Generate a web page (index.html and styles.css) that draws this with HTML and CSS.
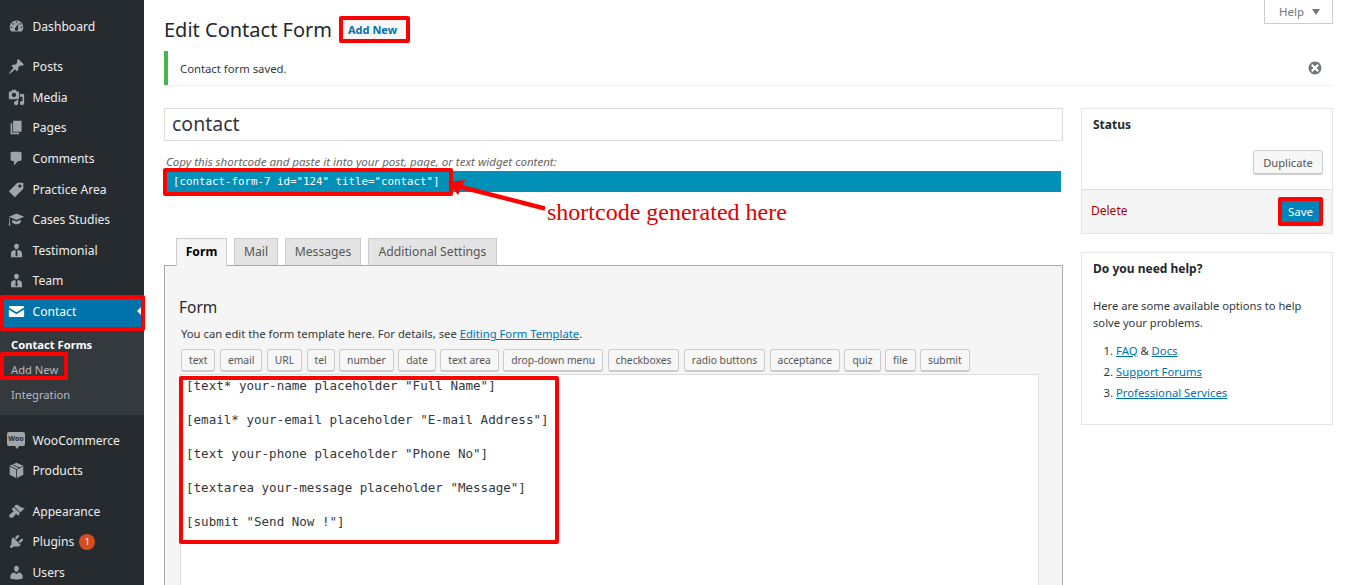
FILE: index.html
```html
<!DOCTYPE html>
<html lang="en">
<head>
<meta charset="utf-8">
<title>Edit Contact Form</title>
<link rel="stylesheet" href="styles.css">
</head>
<body>
<aside class="sidebar">
  <ul class="menu">
    <li class="item"><svg class="ic" viewBox="0 0 20 20"><path fill-rule="evenodd" d="M3.76 16h12.48c1.1-1.37 1.76-3.11 1.76-5 0-4.42-3.58-8-8-8s-8 3.58-8 8c0 1.89.66 3.63 1.76 5zM10 4c.55 0 1 .45 1 1s-.45 1-1 1-1-.45-1-1 .45-1 1-1zM6 6c.55 0 1 .45 1 1s-.45 1-1 1-1-.45-1-1 .45-1 1-1zm8 0c.55 0 1 .45 1 1s-.45 1-1 1-1-.45-1-1 .45-1 1-1zm-5.37 5.55L12 7v6c0 1.1-.9 2-2 2s-2-.9-2-2c0-.57.24-1.08.63-1.45zM4 10c.55 0 1 .45 1 1s-.45 1-1 1-1-.45-1-1 .45-1 1-1zm12 0c.55 0 1 .45 1 1s-.45 1-1 1-1-.45-1-1 .45-1 1-1z"/></svg>Dashboard</li>
  </ul>
  <ul class="menu flush">
    <li class="item"><svg class="ic" viewBox="0 0 20 20"><path d="M10.44 3.02l1.82-1.82 6.36 6.35-1.83 1.82c-1.05-.68-2.48-.57-3.41.36l-.75.75c-.92.93-1.04 2.35-.35 3.41l-1.83 1.82-2.41-2.41-2.8 2.79c-.42.42-3.38 2.71-3.8 2.29s1.86-3.39 2.28-3.81l2.79-2.79L4.1 9.36l1.83-1.82c1.05.69 2.48.57 3.4-.36l.75-.75c.93-.92 1.05-2.35.36-3.41z"/></svg>Posts</li>
    <li class="item"><svg class="ic" viewBox="0 0 20 20"><path fill-rule="evenodd" d="M13 11V4c0-.55-.45-1-1-1h-1.67L9 1H5L3.67 3H2c-.55 0-1 .45-1 1v7c0 .55.45 1 1 1h10c.55 0 1-.45 1-1zM7 4.5c1.38 0 2.5 1.12 2.5 2.5S8.38 9.5 7 9.5 4.5 8.38 4.5 7 5.62 4.5 7 4.5zM14 6h5v10.5c0 1.38-1.12 2.5-2.5 2.5S14 17.88 14 16.5s1.12-2.5 2.5-2.5c.17 0 .34.02.5.05V9h-3V6zm-4 8.05V13h2v3.5c0 1.38-1.12 2.5-2.5 2.5S7 17.88 7 16.5 8.12 14 9.5 14c.17 0 .34.02.5.05z"/></svg>Media</li>
    <li class="item"><svg class="ic" viewBox="0 0 20 20"><path d="M6 15V2h10v13H6zm-1 1h8v2H3V5h2v11z"/></svg>Pages</li>
    <li class="item"><svg class="ic" viewBox="0 0 20 20"><path d="M5 2h9c1.1 0 2 .9 2 2v7c0 1.1-.9 2-2 2h-2l-5 5v-5H5c-1.1 0-2-.9-2-2V4c0-1.1.9-2 2-2z"/></svg>Comments</li>
    <li class="item"><svg class="ic" viewBox="0 0 20 20"><path fill-rule="evenodd" d="M11 2h7v7L8 19l-7-7zm3 6c1.1 0 2-.9 2-2s-.9-2-2-2-2 .9-2 2 .9 2 2 2z"/></svg>Practice Area</li>
    <li class="item"><svg class="ic" viewBox="0 0 20 20"><path d="M10 3L1 6.8l9 3.8 9-3.8zM5 10.3v3.2c1 1.3 3 2.1 5 2.1s4-.8 5-2.1v-3.2l-5 2.1zM1.5 8v5L.8 17h2l-.5-4V8.4z"/></svg>Cases Studies</li>
    <li class="item"><svg class="ic" viewBox="0 0 20 20"><path fill-rule="evenodd" d="M10 2c1.7 0 2.8 1.2 2.8 2.9S11.700 8.500 10 8.500 7.200 6.600 7.200 4.900 8.300 2 10 2zM7.500 9.500L9.200 10.300 8.700 15.500 10 17 11.300 15.500 10.800 10.300 12.500 9.500C14.500 10 16.500 11.200 16.500 13.500V18H3.500V13.500C3.500 11.200 5.500 10 7.500 9.500z"/></svg>Testimonial</li>
    <li class="item"><svg class="ic" viewBox="0 0 20 20"><path fill-rule="evenodd" d="M10 2c1.700 0 2.800 1.200 2.800 2.900S11.700 8.500 10 8.500 7.200 6.600 7.200 4.900 8.300 2 10 2zM7.500 9.500L9.200 10.300 8.700 15.500 10 17 11.300 15.500 10.800 10.300 12.500 9.500C14.500 10 16.500 11.200 16.500 13.500V18H3.500V13.500C3.500 11.200 5.500 10 7.500 9.500z"/></svg>Team</li>
    <li class="item current"><svg class="ic" viewBox="0 0 20 20"><path d="M2.500 3.500h15c.8 0 1.500.7 1.500 1.500v.3l-9 5.500-9-5.500V5c0-.8.7-1.500 1.500-1.500zM1 7.600l9 5.500 9-5.500V15c0 .8-.7 1.500-1.500 1.500h-15C1.700 16.500 1 15.800 1 15z"/></svg>Contact<span class="caret"></span></li>
  </ul>
  <ul class="submenu">
    <li class="sub active">Contact Forms</li>
    <li class="sub">Add New</li>
    <li class="sub">Integration</li>
  </ul>
  <ul class="menu">
    <li class="item"><span class="woo">Woo</span>WooCommerce</li>
    <li class="item"><svg class="ic" viewBox="0 0 20 20"><path d="M10 1l8 3.500v10.500l-8 4-8-4V4.500z"/><path class="cube-lines" d="M2.500 5L10 8.700 17.500 5M10 8.700V19M6 3.500l7.500 3.400"/></svg>Products</li>
  </ul>
  <ul class="menu">
    <li class="item"><svg class="ic" viewBox="0 0 20 20"><path d="M14.480 11.060L7.410 3.990l1.500-1.500c.5-.56 2.300-.47 3.510.32 1.210.8 1.430 1.280 2.910 2.100 1.180.64 2.450 1.260 4.450.85zm-.71.71L6.700 4.700 4.930 6.470c-.39.39-.39 1.020 0 1.410l1.060 1.060c.39.39.39 1.030 0 1.420-.6.6-1.430 1.110-2.210 1.690-.35.26-.7.53-1.010.84C1.430 13.710.96 15.560 2.200 16.800c1.250 1.250 3.110.78 4.110-.22.33-.33.6-.68.86-1.040.57-.78 1.080-1.610 1.690-2.210.39-.39 1.020-.39 1.410 0l1.060 1.060c.39.39 1.020.39 1.410 0z"/></svg>Appearance</li>
    <li class="item"><svg class="ic" viewBox="0 0 20 20"><path d="M13.110 4.360L9.870 7.600 8 5.730l3.240-3.240c.35-.34 1.050-.2 1.560.32.52.51.66 1.210.31 1.550zm-8 1.770l.91-1.120 9.010 9.010-1.190.84c-.71.71-2.630 1.160-3.820 1.160H6.140L4.900 17.260c-.59.59-1.540.59-2.120 0-.59-.58-.59-1.530 0-2.120l1.240-1.240v-3.880c0-1.130.4-3.190 1.090-3.890zm7.260 3.970l3.240-3.240c.34-.35 1.040-.21 1.550.31.52.51.66 1.210.31 1.550l-3.240 3.250z"/></svg>Plugins<span class="badge">1</span></li>
    <li class="item"><svg class="ic" viewBox="0 0 20 20"><path d="M10 9.250c-2.270 0-2.730-3.440-2.730-3.440C7 4.020 7.820 2 9.970 2c2.160 0 2.980 2.020 2.710 3.810 0 0-.41 3.440-2.680 3.440zm0 2.570L12.720 10c2.390 0 4.520 2.330 4.520 4.530v2.490s-3.650 1.130-7.240 1.130c-3.650 0-7.240-1.130-7.240-1.130v-2.490c0-2.250 1.940-4.480 4.470-4.480z"/></svg>Users</li>
  </ul>
</aside>

<main class="content">
  <header class="head">
    <div class="titles">
      <h1 class="title">Edit Contact Form</h1>
      <a class="add-new">Add New</a>
    </div>
    <div class="help-tab">Help<span class="help-caret"></span></div>
  </header>

  <div class="notice">
    <span>Contact form saved.</span>
    <svg class="dismiss" viewBox="0 0 20 20"><path fill-rule="evenodd" d="M10 2c4.420 0 8 3.580 8 8s-3.580 8-8 8-8-3.580-8-8 3.580-8 8-8zM15 13l-3-3 3-3-2-2-3 3-3-3-2 2 3 3-3 3 2 2 3-3 3 3z"/></svg>
  </div>

  <div class="columns">
    <section class="primary">
      <div class="title-input">contact</div>
      <p class="copy-note">Copy this shortcode and paste it into your post, page, or text widget content:</p>
      <div class="shortcode">[contact-form-7 id="124" title="contact"]</div>

      <nav class="tabs">
        <span class="tab tab-form on">Form</span>
        <span class="tab tab-mail">Mail</span>
        <span class="tab tab-msg">Messages</span>
        <span class="tab tab-add">Additional Settings</span>
      </nav>
      <div class="panel">
        <h2 class="panel-title">Form</h2>
        <p class="panel-note">You can edit the form template here. For details, see <a class="link">Editing Form Template</a>.</p>
        <div class="tags">
          <span class="tag">text</span><span class="tag">email</span><span class="tag">URL</span><span class="tag">tel</span><span class="tag">number</span><span class="tag">date</span><span class="tag">text area</span><span class="tag">drop-down menu</span><span class="tag">checkboxes</span><span class="tag">radio buttons</span><span class="tag">acceptance</span><span class="tag">quiz</span><span class="tag">file</span><span class="tag">submit</span>
        </div>
        <pre class="editor">[text* your-name placeholder "Full Name"]

[email* your-email placeholder "E-mail Address"]

[text your-phone placeholder "Phone No"]

[textarea your-message placeholder "Message"]

[submit "Send Now !"]</pre>
      </div>
    </section>

    <aside class="secondary">
      <div class="box status">
        <h3 class="box-title">Status</h3>
        <div class="status-body"><span class="btn">Duplicate</span></div>
        <div class="status-foot">
          <a class="delete">Delete</a>
          <span class="btn-primary">Save</span>
        </div>
      </div>
      <div class="box helpbox">
        <h3 class="box-title">Do you need help?</h3>
        <p class="help-text">Here are some available options to help solve your problems.</p>
        <ol class="help-list">
          <li><a class="link">FAQ</a> &amp; <a class="link">Docs</a></li>
          <li><a class="link">Support Forums</a></li>
          <li><a class="link">Professional Services</a></li>
        </ol>
      </div>
    </aside>
  </div>
</main>

<div class="mark mark-add"></div>
<div class="mark mark-code"></div>
<div class="mark mark-save"></div>
<div class="mark mark-contact"></div>
<div class="mark mark-subadd"></div>
<div class="mark mark-editor"></div>
<svg class="arrow" viewBox="0 0 100 40"><path d="M100 31.500L16 10" stroke="#f00" stroke-width="4.500" fill="none"/><path d="M3 5L20 3 13 18z" fill="#f00"/></svg>
<div class="callout">shortcode generated here</div>
</body>
</html>
```

FILE: styles.css
```css
* { box-sizing: border-box; }
html, body { margin: 0; padding: 0; height: 585px; overflow: hidden; }
body {
  display: flex;
  background: #fff;
  color: #32373c;
  font-family: "Noto Sans", "Open Sans", sans-serif;
  font-size: 12px;
  line-height: 17px;
}
ul, ol { list-style: none; margin: 0; padding: 0; }
h1, h2, h3, p { margin: 0; font-weight: 400; }

/* Sidebar */
.sidebar {
  flex: 0 0 144px;
  width: 144px;
  height: 585px;
  padding-top: 10.8px;
  background: #262b30;
  overflow: hidden;
}
.menu { margin-bottom: 10px; }
.menu.flush { margin-bottom: 0; }
.item {
  position: relative;
  display: flex;
  align-items: center;
  height: 30.6px;
  padding-left: 8px;
  color: #eee;
  font-size: 12.1px;
  white-space: nowrap;
}
.ic { width: 17px; height: 17px; margin-right: 7.5px; flex: none; fill: #a0a5aa; }
.cube-lines { fill: none; stroke: #262b30; stroke-width: 1; }
.current { background: #0073aa; color: #fff; }
.current .ic { fill: #fff; }
.caret {
  position: absolute;
  right: 3px;
  top: 11px;
  border: 4px solid transparent;
  border-left-width: 0;
  border-right-color: #fff;
}
.woo {
  position: relative;
  flex: none;
  width: 18px;
  height: 14px;
  margin: -2px 7.5px 0 -1px;
  border-radius: 2px;
  background: #a0a5aa;
  color: #262b30;
  font-size: 7px;
  line-height: 14px;
  text-align: center;
  font-weight: 700;
}
.woo::after {
  content: "";
  position: absolute;
  left: 8px;
  bottom: -3px;
  border: 2px solid transparent;
  border-top: 3px solid #a0a5aa;
  border-bottom: 0;
}
.badge {
  display: inline-block;
  width: 16px;
  height: 16px;
  margin-left: 5px;
  border-radius: 50%;
  background: #d54e21;
  color: #fff;
  font-size: 9px;
  line-height: 16px;
  text-align: center;
}
.submenu { height: 88px; margin-bottom: 10px; padding-top: 6px; background: #34393e; }
.sub { height: 25px; padding-left: 11px; color: #b4b9be; font-size: 11.2px; line-height: 24px; }
.sub.active { color: #fff; font-weight: 700; }

/* Main */
.content { flex: 1; min-width: 0; padding: 0 18px 0 20px; }
.head { display: flex; justify-content: space-between; align-items: flex-start; height: 51px; }
.titles { display: flex; align-items: center; gap: 10px; padding-top: 17px; }
.title { font-size: 20px; line-height: 26px; color: #23282d; }
.add-new {
  padding: 0 6px;
  background: #f7f7f7;
  color: #0073aa;
  font-size: 11px;
  font-weight: 700;
  line-height: 24px;
}
.help-tab {
  display: flex;
  align-items: center;
  justify-content: center;
  gap: 8px;
  width: 69px;
  height: 24px;
  padding-left: 2px;
  border: 1px solid #ccc;
  border-top: 0;
  color: #72777c;
  font-size: 11.5px;
}
.help-caret { border: 4px solid transparent; border-top: 6px solid #72777c; border-bottom: 0; }
.notice {
  display: flex;
  align-items: center;
  justify-content: space-between;
  height: 34px;
  margin-bottom: 23px;
  padding: 0 10px 0 12px;
  background: #fff;
  border-left: 4px solid #46b450;
  box-shadow: 0 1px 1px rgba(0,0,0,.05);
  font-size: 11.3px;
}
.dismiss { width: 16px; height: 16px; fill: #72777c; }
.columns { display: flex; gap: 18px; align-items: flex-start; }
.primary { flex: 0 0 899px; width: 899px; }
.secondary { flex: 0 0 252px; width: 252px; }

.title-input {
  height: 33px;
  padding: 0 7px;
  border: 1px solid #ddd;
  color: #32373c;
  font-size: 19.5px;
  line-height: 30px;
}
.copy-note {
  margin: 12px 2px 0;
  height: 18px;
  color: #666;
  font-size: 11.55px;
  font-style: italic;
  white-space: nowrap;
}
.shortcode {
  height: 21px;
  margin: 0 2px;
  padding-left: 7px;
  background: #0090b8;
  color: #fff;
  font-family: "DejaVu Sans Mono", monospace;
  font-size: 10.8px;
  line-height: 21px;
  white-space: pre;
}
.tabs { display: flex; gap: 7px; margin-top: 46px; padding-left: 12px; height: 27px; }
.tab {
  position: relative;
  display: block;
  height: 27px;
  border: 1px solid #ccc;
  border-bottom: 0;
  background: #e4e4e4;
  color: #555;
  font-size: 12.2px;
  line-height: 26px;
  text-align: center;
}
.tab-form { width: 51px; }
.tab-mail { width: 44px; }
.tab-msg { width: 76px; }
.tab-add { width: 129px; }
.tab.on {
  height: 28px;
  background: #f5f5f5;
  color: #000;
  font-weight: 700;
  z-index: 1;
}
.panel {
  height: 330px;
  padding: 0 23px 0 15px;
  overflow: hidden;
  background: #f5f5f5;
  border: 1px solid #aaa;
}
.panel-title { margin-left: -1px; padding-top: 28px; font-size: 15.5px; line-height: 26px; color: #23282d; }
.panel-note { margin: 4px 0 0 1px; height: 25px; font-size: 11.25px; line-height: 19px; white-space: nowrap; }
.link { color: #0073aa; text-decoration: underline; }
.tags { display: flex; gap: 4.4px; padding-left: 1px; height: 25px; }
.tag {
  height: 23px;
  padding: 0 7px;
  border: 1px solid #ccc;
  border-bottom-width: 2px;
  border-radius: 3px;
  background: #f7f7f7;
  color: #555;
  font-size: 10.3px;
  line-height: 20px;
  white-space: nowrap;
}
.editor {
  height: 240px;
  margin: 0;
  padding: 2px 5px;
  border: 1px solid #ddd;
  background: #fff;
  color: #32373c;
  font-family: "DejaVu Sans Mono", monospace;
  font-size: 12.55px;
  line-height: 17px;
}

/* Side boxes */
.box { border: 1px solid #e5e5e5; background: #fff; }
.box-title { padding: 7px 11px 0; color: #23282d; font-size: 12px; font-weight: 700; line-height: 17px; }
.status { height: 126px; margin-bottom: 18px; }
.status-body { display: flex; justify-content: flex-end; height: 56px; padding: 17px 9px 0 0; }
.btn {
  height: 25px;
  width: 70px;
  border: 1px solid #ccc;
  border-bottom-width: 2px;
  border-radius: 3px;
  background: #f7f7f7;
  color: #555;
  font-size: 11.2px;
  line-height: 23px;
  text-align: center;
}
.status-foot {
  display: flex;
  align-items: center;
  justify-content: space-between;
  height: 44px;
  padding: 0 13px 0 9px;
  background: #f5f5f5;
  border-top: 1px solid #ddd;
}
.delete { margin-bottom: 2px; color: #a00; font-size: 12px; }
.btn-primary {
  width: 37px;
  height: 21px;
  background: #0085ba;
  color: #fff;
  font-size: 11.5px;
  line-height: 21px;
  text-align: center;
}
.helpbox { height: 173px; }
.help-text { margin: 20px 11px 0; font-size: 11.2px; line-height: 17px; }
.help-list { list-style: decimal; margin-top: 9px; padding-left: 34px; font-size: 11.3px; line-height: 21px; }

/* Red annotations over the screenshot */
.mark { position: absolute; border: 4px solid #f00; border-radius: 2px; }
.mark-add { left: 339px; top: 16px; width: 71px; height: 27px; }
.mark-code { left: 163px; top: 168px; width: 290px; height: 28px; }
.mark-save { left: 1278px; top: 197px; width: 45px; height: 29px; }
.mark-contact { left: 0; top: 295px; width: 145px; height: 36px; }
.mark-subadd { left: 0; top: 352px; width: 68px; height: 28px; }
.mark-editor { left: 179px; top: 376px; width: 380px; height: 168px; }
.arrow { position: absolute; left: 445px; top: 177px; width: 100px; height: 40px; }
.callout {
  position: absolute;
  left: 547px;
  top: 197px;
  color: #e00000;
  font-family: "Liberation Serif", serif;
  font-size: 24px;
  line-height: 30px;
  white-space: nowrap;
}
```
